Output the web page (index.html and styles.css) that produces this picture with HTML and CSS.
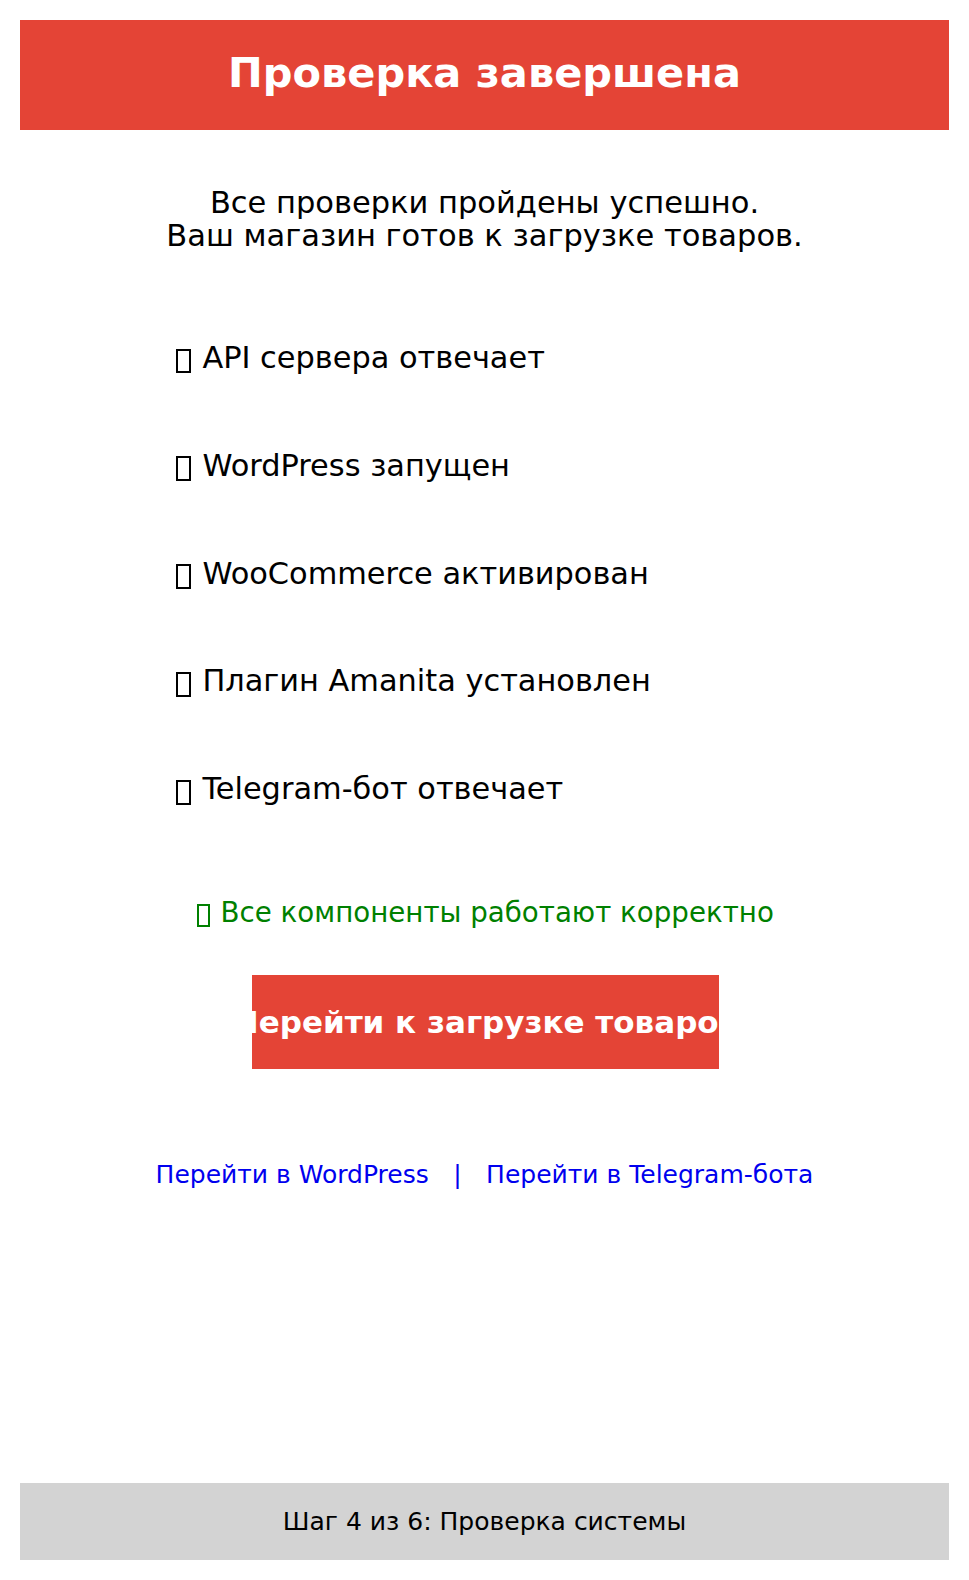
FILE: index.html
```html
<!DOCTYPE html>
<html lang="ru">
<head>
<meta charset="utf-8">
<title>Проверка завершена</title>
<link rel="stylesheet" href="styles.css">
</head>
<body>
<div class="page">
  <header class="hero">
    <h1 class="hero-title">Проверка завершена</h1>
  </header>
  <p class="intro">Все проверки пройдены успешно.<br>Ваш магазин готов к загрузке товаров.</p>
  <ul class="checks">
    <li class="check"><span class="tofu" aria-label="✅"></span> API сервера отвечает</li>
    <li class="check"><span class="tofu" aria-label="✅"></span> WordPress запущен</li>
    <li class="check"><span class="tofu" aria-label="✅"></span> WooCommerce активирован</li>
    <li class="check"><span class="tofu" aria-label="✅"></span> Плагин Amanita установлен</li>
    <li class="check"><span class="tofu" aria-label="✅"></span> Telegram-бот отвечает</li>
  </ul>
  <p class="status"><span class="tofu" aria-label="✅"></span> Все компоненты работают корректно</p>
  <a class="cta" href="#"><span class="cta-label">Перейти к загрузке товаров</span></a>
  <nav class="links">
    <a class="link" href="#">Перейти в WordPress</a>
    <span class="sep">|</span>
    <a class="link" href="#">Перейти в Telegram-бота</a>
  </nav>
  <footer class="footer">Шаг 4 из 6: Проверка системы</footer>
</div>
</body>
</html>
```

FILE: styles.css
```css
* { box-sizing: border-box; }

html, body {
  margin: 0;
  padding: 0;
  background: #ffffff;
}

body {
  font-family: "DejaVu Sans", sans-serif;
  color: #000;
}

.page {
  display: flex;
  flex-direction: column;
  min-height: 1580px;
  padding: 20px;
}

.hero {
  background: #e44436;
  height: 110px;
  padding-top: 29px;
  text-align: center;
}

.hero-title {
  margin: 0;
  font-size: 41.5px;
  font-weight: bold;
  line-height: 48px;
  color: #fff;
}

.intro {
  margin: 56px 0 0;
  font-size: 30.5px;
  line-height: 33px;
  text-align: center;
}

.checks {
  list-style: none;
  width: 620px;
  margin: 88px auto 0;
  padding: 0;
  display: flex;
  flex-direction: column;
  gap: 72.8px;
}

.check {
  font-size: 30.4px;
  line-height: 35px;
}

.tofu {
  display: inline-block;
  width: 0.5em;
  height: 0.82em;
  margin: 0 0.05em;
  border: 2px solid currentColor;
  vertical-align: -0.18em;
}

.status {
  margin: 89.5px 0 0;
  font-size: 27.7px;
  line-height: normal;
  color: #008000;
  text-align: center;
}

.cta {
  align-self: center;
  width: 467px;
  height: 94px;
  margin: 46px 0 0 2px;
  background: #e44436;
  display: flex;
  align-items: center;
  justify-content: center;
  overflow: hidden;
  text-decoration: none;
}

.cta-label {
  flex: none;
  white-space: nowrap;
  color: #fff;
  font-size: 31px;
  font-weight: bold;
}

.links {
  margin-top: 91px;
  text-align: center;
  font-size: 25px;
  line-height: normal;
  color: #0000ee;
}

.link {
  color: #0000ee;
  text-decoration: none;
}

.sep {
  margin: 0 16.5px;
}

.footer {
  margin-top: auto;
  height: 77px;
  background: #d3d3d3;
  display: flex;
  align-items: center;
  justify-content: center;
  font-size: 25px;
}
```
